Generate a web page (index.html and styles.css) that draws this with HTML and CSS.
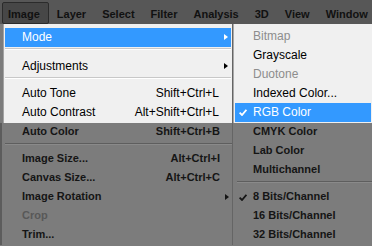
FILE: index.html
```html
<!DOCTYPE html>
<html lang="en">
<head>
<meta charset="UTF-8" />
<title>Image menu</title>
<link rel="stylesheet" href="styles.css">
</head>
<body>

<div class="menubar">
  <span class="top active">Image</span>
  <span class="top">Layer</span>
  <span class="top">Select</span>
  <span class="top">Filter</span>
  <span class="top">Analysis</span>
  <span class="top">3D</span>
  <span class="top">View</span>
  <span class="top">Window</span>
</div>

<div class="menus">
  <div class="menu main">
    <div class="lit">
      <div class="row hl"><span>Mode</span><span class="key"></span><span class="arrow"></span></div>
      <div class="sep sep-mode"></div>
      <div class="row"><span>Adjustments</span><span class="key"></span><span class="arrow"></span></div>
      <div class="sep"></div>
      <div class="row"><span>Auto Tone</span><span class="key">Shift+Ctrl+L</span></div>
      <div class="row"><span>Auto Contrast</span><span class="key">Alt+Shift+Ctrl+L</span></div>
    </div>
    <div class="dim">
      <div class="row"><span>Auto Color</span><span class="key">Shift+Ctrl+B</span></div>
      <div class="sep"></div>
      <div class="row"><span>Image Size...</span><span class="key">Alt+Ctrl+I</span></div>
      <div class="row"><span>Canvas Size...</span><span class="key">Alt+Ctrl+C</span></div>
      <div class="row"><span>Image Rotation</span><span class="key"></span><span class="arrow"></span></div>
      <div class="row off"><span>Crop</span></div>
      <div class="row"><span>Trim...</span></div>
    </div>
  </div>

  <div class="menu sub">
    <div class="lit">
      <div class="row off"><span class="check"></span><span>Bitmap</span></div>
      <div class="row"><span class="check"></span><span>Grayscale</span></div>
      <div class="row off"><span class="check"></span><span>Duotone</span></div>
      <div class="row"><span class="check"></span><span>Indexed Color...</span></div>
      <div class="row hl">
        <span class="check"><svg width="8" height="7" viewBox="0 0 8 7"><polyline points="0.6,3.6 3,6 7.4,0.8" /></svg></span>
        <span>RGB Color</span>
      </div>
    </div>
    <div class="dim">
      <div class="row"><span class="check"></span><span>CMYK Color</span></div>
      <div class="row"><span class="check"></span><span>Lab Color</span></div>
      <div class="row"><span class="check"></span><span>Multichannel</span></div>
      <div class="sep"></div>
      <div class="row">
        <span class="check"><svg width="8" height="7" viewBox="0 0 8 7"><polyline points="0.6,3.6 3,6 7.4,0.8" /></svg></span>
        <span>8 Bits/Channel</span>
      </div>
      <div class="row"><span class="check"></span><span>16 Bits/Channel</span></div>
      <div class="row"><span class="check"></span><span>32 Bits/Channel</span></div>
    </div>
  </div>
</div>

</body>
</html>
```

FILE: styles.css
```css
body {
  margin: 0;
  width: 372px;
  height: 246px;
  overflow: hidden;
  background: #7c7c7c;
  font-family: "Liberation Sans", Arial, sans-serif;
}

/* top bar */
.menubar {
  height: 24px;
  background: #575757;
  display: flex;
}
.top {
  margin-top: 3px;
  height: 18px;
  line-height: 18px;
  padding: 2px 8px 0;
  font-size: 11px;
  font-weight: bold;
  color: #111;
  white-space: nowrap;
}
.top.active {
  margin: 2px 0 0 2px;
  padding-left: 5px;
  background: #474747;
  border: 1px solid #2b2b2b;
  border-radius: 2px;
}

/* menus */
.menus {
  display: flex;
}
.main {
  width: 232px;
}
.sub {
  width: 139px;
  border-left: 1px solid #656565;
}

.lit {
  background: #f0f0f0;
  color: #000;
  font-size: 12px;
}
.main .lit {
  margin-left: 3px;
  padding: 4px 1px 1px;
  border-left: 1px solid #a3a3a3;
}
.sub .lit {
  padding: 3px 1px 1px 2px;
  box-shadow: inset 1px 0 0 #a8a8a8;
}

.dim {
  color: #151515;
  font-size: 11px;
  font-weight: bold;
}
.main .dim {
  border-left: 2px solid #5c5c5c;
  padding-left: 3px;
}
.sub .dim {
  padding-left: 2px;
}

.row {
  display: grid;
  grid-template-columns: 1fr auto 12px;
  align-items: start;
  height: 19px;
  line-height: 19px;
  padding-left: 17px;
  white-space: nowrap;
}
.dim .row {
  line-height: 17px;
}
.sub .row {
  grid-template-columns: 18px 1fr;
  padding-left: 0;
}
.row.hl {
  background: #3399ff;
  color: #fff;
}
.lit .row.off {
  color: #8d8d8d;
}
.dim .row.off {
  color: #585858;
}

.key {
  text-align: right;
}
.arrow {
  width: 0;
  height: 0;
  margin: 6px 0 0 5px;
  border-left: 4px solid currentColor;
  border-top: 3.5px solid transparent;
  border-bottom: 3.5px solid transparent;
}

.check svg {
  display: block;
  margin: 6px 0 0 4px;
}
.check polyline {
  fill: none;
  stroke: currentColor;
  stroke-width: 1.8;
}

/* separators */
.sep {
  height: 1px;
  margin: 1px 0 5px;
  background: #c8c8c8;
  border-bottom: 1px solid #fff;
}
.sep-mode {
  margin-bottom: 7px;
}
.dim .sep {
  background: #5e5e5e;
  border-bottom-color: #8a8a8a;
  margin: 1px 0 5px;
}
.sub .dim .sep {
  margin-left: 2px;
}
```
